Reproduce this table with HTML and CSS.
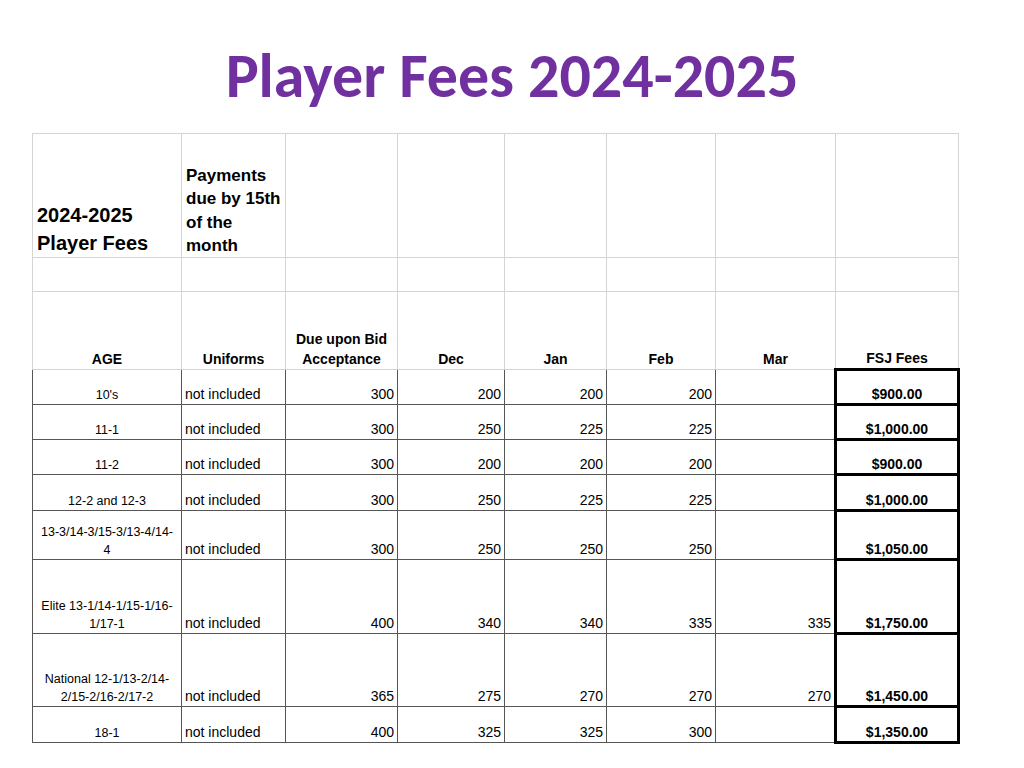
FILE: index.html
```html
<!DOCTYPE html>
<html>
<head>
<meta charset="utf-8">
<title>Player Fees 2024-2025</title>
<link rel="stylesheet" href="styles.css">
</head>
<body>
<h1 class="title">Player Fees 2024-2025</h1>
<table class="fees">
  <colgroup>
    <col class="c-age"><col class="c-uni"><col class="c-bid"><col class="c-dec"><col class="c-jan"><col class="c-feb"><col class="c-mar"><col class="c-fsj">
  </colgroup>
  <thead>
    <tr class="r-intro">
      <td class="intro-title">2024-2025<br>Player Fees</td>
      <td class="intro-note">Payments<br>due by 15th<br>of the<br>month</td>
      <td></td><td></td><td></td><td></td><td></td><td></td>
    </tr>
    <tr class="r-spacer">
      <td></td><td></td><td></td><td></td><td></td><td></td><td></td><td></td>
    </tr>
    <tr class="r-head">
      <th>AGE</th><th>Uniforms</th><th>Due upon Bid<br>Acceptance</th><th>Dec</th><th>Jan</th><th>Feb</th><th>Mar</th><th class="fsj-head">FSJ Fees</th>
    </tr>
  </thead>
  <tbody>
    <tr class="r-35">
      <td class="age">10's</td><td class="uni">not included</td><td class="num">300</td><td class="num">200</td><td class="num">200</td><td class="num">200</td><td class="num"></td><td class="fsj">$900.00</td>
    </tr>
    <tr class="r-35">
      <td class="age">11-1</td><td class="uni">not included</td><td class="num">300</td><td class="num">250</td><td class="num">225</td><td class="num">225</td><td class="num"></td><td class="fsj">$1,000.00</td>
    </tr>
    <tr class="r-35">
      <td class="age">11-2</td><td class="uni">not included</td><td class="num">300</td><td class="num">200</td><td class="num">200</td><td class="num">200</td><td class="num"></td><td class="fsj">$900.00</td>
    </tr>
    <tr class="r-36">
      <td class="age">12-2 and 12-3</td><td class="uni">not included</td><td class="num">300</td><td class="num">250</td><td class="num">225</td><td class="num">225</td><td class="num"></td><td class="fsj">$1,000.00</td>
    </tr>
    <tr class="r-49">
      <td class="age">13-3/14-3/15-3/13-4/14-<br>4</td><td class="uni">not included</td><td class="num">300</td><td class="num">250</td><td class="num">250</td><td class="num">250</td><td class="num"></td><td class="fsj">$1,050.00</td>
    </tr>
    <tr class="r-74">
      <td class="age">Elite 13-1/14-1/15-1/16-<br>1/17-1</td><td class="uni">not included</td><td class="num">400</td><td class="num">340</td><td class="num">340</td><td class="num">335</td><td class="num">335</td><td class="fsj">$1,750.00</td>
    </tr>
    <tr class="r-73">
      <td class="age">National 12-1/13-2/14-<br>2/15-2/16-2/17-2</td><td class="uni">not included</td><td class="num">365</td><td class="num">275</td><td class="num">270</td><td class="num">270</td><td class="num">270</td><td class="fsj">$1,450.00</td>
    </tr>
    <tr class="r-36">
      <td class="age">18-1</td><td class="uni">not included</td><td class="num">400</td><td class="num">325</td><td class="num">325</td><td class="num">300</td><td class="num"></td><td class="fsj">$1,350.00</td>
    </tr>
  </tbody>
</table>
</body>
</html>
```
FILE: styles.css
```css
html, body {
  margin: 0;
  padding: 0;
  background: #ffffff;
}

body {
  font-family: "Liberation Sans", Arial, sans-serif;
  color: #000000;
}

.title {
  margin: 42px 0 0;
  height: 68px;
  line-height: 68px;
  text-align: center;
  font-family: Carlito, "Open Sans", Lato, sans-serif;
  font-weight: 700;
  font-size: 62px;
  color: #7030a0;
}

.fees {
  margin: 23px 0 0 32px;
  border-collapse: collapse;
  table-layout: fixed;
  width: 927px;
}

.c-age { width: 149px; }
.c-uni { width: 104px; }
.c-bid { width: 112px; }
.c-dec { width: 107px; }
.c-jan { width: 102px; }
.c-feb { width: 109px; }
.c-mar { width: 120px; }
.c-fsj { width: 123px; }

.fees td,
.fees th {
  padding: 0 4px;
  vertical-align: bottom;
  overflow: visible;
  white-space: nowrap;
}

/* header area: light grid */
.fees thead td,
.fees thead th {
  border: 1px solid #d4d4d4;
}

.r-intro { height: 124px; }
.r-spacer { height: 34px; }
.r-head { height: 78px; }

.intro-title {
  text-align: left;
  font-weight: 700;
  font-size: 20px;
  line-height: 27.5px;
  padding: 0 4px 0 4px;
}

.intro-note {
  text-align: left;
  font-weight: 700;
  font-size: 17px;
  line-height: 23.2px;
  padding: 0 2px 2px 3px;
}

.r-head th {
  text-align: center;
  font-weight: 700;
  font-size: 14px;
  line-height: 19.5px;
  padding-bottom: 0;
  border-bottom: 1px solid #4a4a4a;
}

.r-head th.fsj-head {
  border-bottom: 3px solid #000000;
}

/* data area: dark grid */
.fees tbody td {
  border: 1px solid #555555;
  font-size: 14px;
  line-height: 16px;
  padding-bottom: 2px;
}

.r-35 { height: 35px; }
.r-36 { height: 36px; }
.r-49 { height: 49px; }
.r-74 { height: 74px; }
.r-73 { height: 73px; }

.fees tbody td.age {
  text-align: center;
  font-size: 12.5px;
  line-height: 18px;
  padding-bottom: 0;
}

.fees tbody td.uni {
  text-align: left;
  padding-left: 3px;
}

.fees tbody td.num {
  text-align: right;
  padding-right: 3px;
}

.fees tbody td.fsj {
  text-align: center;
  font-weight: 700;
  border: 3px solid #000000;
  padding-bottom: 1px;
}
```
